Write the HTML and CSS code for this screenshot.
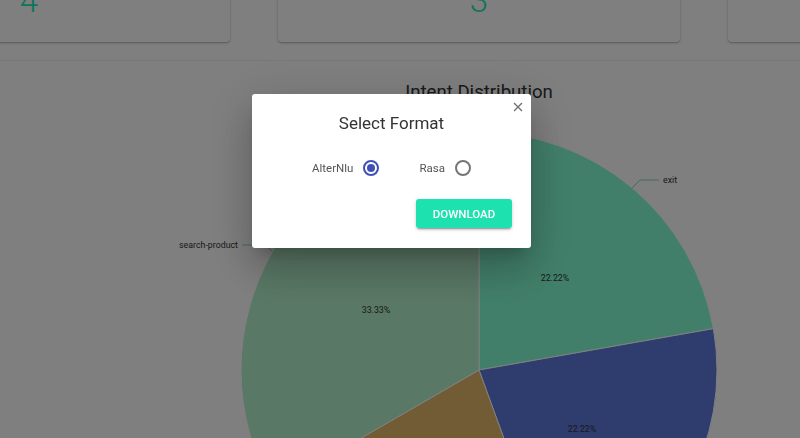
FILE: index.html
```html
<!DOCTYPE html>
<html>
<head>
<meta charset="utf-8">
<link rel="stylesheet" href="styles.css">
</head>
<body>
<div class="page">
  <div class="cards">
    <div class="card"><span class="stat">4</span></div>
    <div class="card"><span class="stat">3</span></div>
    <div class="card"></div>
  </div>
  <div class="chart-panel">
    <svg class="chart" width="1302" height="377" viewBox="0 0 1302 377">
      <text class="chart-title" x="651" y="37" text-anchor="middle">Intent Distribution</text>
      <g class="slices">
        <path d="M651 309 L651 71 A238 238 0 0 1 885.38 267.67 Z" fill="#84ffd4"/>
        <path d="M651 309 L885.38 267.67 A238 238 0 0 1 732.40 532.65 Z" fill="#5c78dc"/>
        <path d="M651 309 L732.40 532.65 A238 238 0 0 1 444.89 428 Z" fill="#e2b86a"/>
        <path d="M651 309 L444.89 428 A238 238 0 0 1 651 71 Z" fill="#b4f0cc"/>
      </g>
      <polyline class="leader" points="804,127 812,119 831,119"/>
      <polyline class="leader" points="444,190 437,184 414,184"/>
      <text class="slice-label" x="835" y="122">exit</text>
      <text class="slice-label" x="410" y="187" text-anchor="end">search-product</text>
      <text class="pct" x="727" y="220" text-anchor="middle">22.22%</text>
      <text class="pct" x="548" y="252" text-anchor="middle">33.33%</text>
      <text class="pct" x="754" y="371" text-anchor="middle">22.22%</text>
    </svg>
  </div>
</div>

<div class="backdrop"></div>
<div class="modal">
  <button class="close" aria-label="close">
    <svg width="10" height="10" viewBox="0 0 10 10"><path d="M1 1 L9 9 M9 1 L1 9" stroke="#6f6f6f" stroke-width="1.3" fill="none"/></svg>
  </button>
  <div class="modal-title">Select Format</div>
  <div class="options">
    <label class="option">
      <span class="option-text">AlterNlu</span>
      <span class="radio checked"><span class="dot"></span></span>
    </label>
    <label class="option">
      <span class="option-text">Rasa</span>
      <span class="radio"></span>
    </label>
  </div>
  <div class="actions">
    <button class="download">DOWNLOAD</button>
  </div>
</div>
</body>
</html>
```

FILE: styles.css
```css
html, body {
  margin: 0;
  padding: 0;
  width: 800px;
  height: 438px;
  overflow: hidden;
  background: #ffffff;
  font-family: Roboto, "Liberation Sans", sans-serif;
}

.page {
  width: 1302px;
  margin: -60px 0 0 -172px;
}

.cards {
  display: flex;
  gap: 48px;
}

.card {
  width: 402px;
  height: 102px;
  background: #fff;
  border-radius: 4px;
  box-shadow: 0 1px 3px rgba(0,0,0,0.22), 0 1px 1px rgba(0,0,0,0.12);
  display: flex;
  justify-content: center;
  align-items: flex-end;
  box-sizing: border-box;
  padding-bottom: 25px;
}

.stat {
  font-size: 33px;
  font-weight: 300;
  line-height: 33px;
  color: #1de9b6;
}

.chart-panel {
  margin-top: 18px;
  border-top: 1px solid #f0f0f0;
  height: 377px;
  overflow: hidden;
}

.chart {
  display: block;
}

.chart-title {
  font-family: Roboto, "Liberation Sans", sans-serif;
  font-size: 18.6px;
  fill: #333;
}

.slices path {
  stroke: #ffffff;
  stroke-width: 1;
}

.leader {
  fill: none;
  stroke: #84d8b8;
  stroke-width: 1;
}

.slice-label, .pct {
  font-family: Roboto, "Liberation Sans", sans-serif;
  font-size: 8.8px;
  fill: #333;
}

.backdrop {
  position: fixed;
  inset: 0;
  background: rgba(0,0,0,0.5);
}

.modal {
  position: fixed;
  left: 252px;
  top: 94px;
  width: 279px;
  height: 154px;
  box-sizing: border-box;
  background: #fff;
  border-radius: 3px;
  box-shadow: 0 11px 15px -7px rgba(0,0,0,0.2), 0 24px 38px 3px rgba(0,0,0,0.14), 0 9px 46px 8px rgba(0,0,0,0.12);
  padding: 18px 19px 0;
  display: flex;
  flex-direction: column;
}

.close {
  position: absolute;
  top: 8px;
  right: 8px;
  width: 10px;
  height: 10px;
  padding: 0;
  border: 0;
  background: none;
  display: flex;
}

.modal-title {
  text-align: center;
  font-size: 17px;
  line-height: 22px;
  color: #333;
}

.options {
  margin-top: 22px;
  display: flex;
  justify-content: center;
  gap: 40px;
  height: 24px;
  align-items: center;
}

.option {
  display: flex;
  align-items: center;
  gap: 10px;
}

.option-text {
  font-size: 11.5px;
  color: #555;
}

.radio {
  width: 16px;
  height: 16px;
  box-sizing: border-box;
  border: 2px solid #757575;
  border-radius: 50%;
  display: flex;
  align-items: center;
  justify-content: center;
}

.radio.checked {
  border-color: #3f51b5;
}

.dot {
  width: 8px;
  height: 8px;
  border-radius: 50%;
  background: #3f51b5;
}

.actions {
  margin-top: 19px;
  display: flex;
  justify-content: flex-end;
}

.download {
  width: 96px;
  height: 29px;
  border: 0;
  border-radius: 3px;
  background: #1de2b0;
  color: #fff;
  font-family: Roboto, "Liberation Sans", sans-serif;
  font-size: 11.5px;
  font-weight: 500;
  padding: 0;
  box-shadow: 0 3px 1px -2px rgba(0,0,0,0.2), 0 2px 2px 0 rgba(0,0,0,0.14), 0 1px 5px 0 rgba(0,0,0,0.12);
}
```
